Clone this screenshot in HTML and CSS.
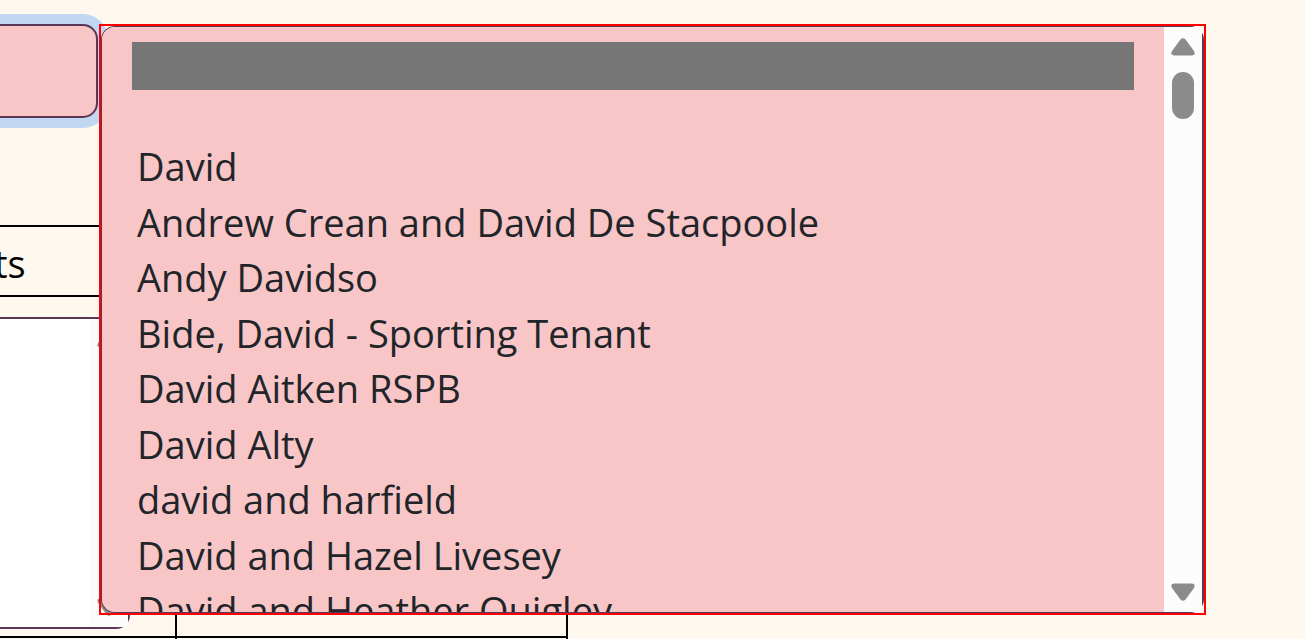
FILE: index.html
```html
<!DOCTYPE html>
<html lang="en">
<head>
<meta charset="utf-8">
<title>Contacts</title>
<link rel="stylesheet" href="styles.css">
</head>
<body>
<main class="page">
  <input class="search" type="text" aria-label="Search contacts">
  <table class="grid">
    <thead>
      <tr><th class="first" scope="col">ts</th><th></th></tr>
    </thead>
    <tbody>
      <tr>
        <td class="first">
          <div class="notes">
            <textarea class="notes-text" aria-label="Notes"></textarea>
            <div class="track">
              <svg class="arrow" viewBox="0 0 24 18" aria-hidden="true"><path d="M9.5 1.5Q12-1.2 14.5 1.5L23 13Q25 17.5 20.5 17.5H3.5Q-1 17.5 1 13Z"/></svg>
              <svg class="arrow" viewBox="0 0 24 18" aria-hidden="true"><path d="M9.5 16.5Q12 19.2 14.5 16.5L23 5Q25 .5 20.5 .5H3.5Q-1 .5 1 5Z"/></svg>
            </div>
          </div>
        </td>
        <td></td>
      </tr>
      <tr class="next"><td class="first"></td><td></td></tr>
    </tbody>
  </table>

  <div class="popup">
    <div class="panel">
      <select class="options" size="9" aria-label="Matching contacts">
        <option class="blank current"></option>
        <option class="blank"></option>
        <option>David</option>
        <option>Andrew Crean and David De Stacpoole</option>
        <option>Andy Davidso</option>
        <option>Bide, David - Sporting Tenant</option>
        <option>David Aitken RSPB</option>
        <option>David Alty</option>
        <option>david and harfield</option>
        <option>David and Hazel Livesey</option>
        <option>David and Heather Quigley</option>
      </select>
      <div class="track">
        <svg class="arrow" viewBox="0 0 24 18" aria-hidden="true"><path d="M9.5 1.5Q12-1.2 14.5 1.5L23 13Q25 17.5 20.5 17.5H3.5Q-1 17.5 1 13Z"/></svg>
        <div class="thumb"></div>
        <svg class="arrow" viewBox="0 0 24 18" aria-hidden="true"><path d="M9.5 16.5Q12 19.2 14.5 16.5L23 5Q25 .5 20.5 .5H3.5Q-1 .5 1 5Z"/></svg>
      </div>
    </div>
  </div>
</main>
</body>
</html>
```

FILE: styles.css
```css
* {
  box-sizing: border-box;
}

body {
  margin: 0;
  background: #fff8ee;
  color: #000;
  font: 38px/56px "Segoe UI", "Open Sans", "Noto Sans", sans-serif;
}

.page {
  position: relative;
  height: 100vh;
  padding-top: 24px;
  overflow: hidden;
}

.search {
  display: block;
  width: 98px;
  height: 94px;
  margin: 0 0 107px;
  border: 2px solid #5c3657;
  border-left: 0;
  border-radius: 0 15px 15px 0;
  outline: 0;
  background: #f8c6c7;
  box-shadow: 0 0 0 10px #c1d7f2;
  font: inherit;
}

.grid {
  width: 568px;
  table-layout: fixed;
  border-spacing: 0;
}

.grid th,
.grid td {
  padding: 0;
  border: solid #000;
  border-width: 0 2px 2px 0;
  font-weight: 400;
  text-align: left;
  vertical-align: top;
}

.grid th {
  height: 72px;
  padding: 8px 0 4px;
  border-top-width: 2px;
  text-indent: -6px;
}

.grid .first {
  width: 177px;
}

.next {
  height: 72px;
}

.notes {
  display: flex;
  width: 130px;
  height: 312px;
  margin: 20px 0 7px;
  border: 2px solid #5c3657;
  border-left: 0;
  border-radius: 0 14px 14px 0;
}

.notes-text {
  flex: 1;
  min-width: 0;
  padding: 0;
  border: 0;
  outline: 0;
  resize: none;
  background: #fff;
  font: inherit;
}

.track {
  display: flex;
  flex: none;
  flex-direction: column;
  align-items: center;
  width: 38px;
  padding: 11px 0;
  background: #fcfcfc;
}

.arrow {
  width: 24px;
  height: 18px;
  fill: #8b8b8b;
}

.arrow:last-child {
  margin-top: auto;
}

.thumb {
  width: 22px;
  height: 47px;
  margin-top: 16px;
  border-radius: 11px;
  background: #8b8b8b;
}

.popup {
  position: absolute;
  inset: 24px 99px;
  border: 2px solid #f00;
}

.panel {
  display: flex;
  height: 100%;
  border: 1px solid #5c3657;
  border-right-width: 2px;
  border-radius: 14px;
}

.options {
  flex: 1;
  min-width: 0;
  height: 100%;
  padding: 15px 30px 0;
  overflow: hidden;
  border: 0;
  border-radius: 13px 0 0 13px;
  outline: 0;
  appearance: none;
  background: #f8c6c7;
  color: #212529;
  font: inherit;
  scrollbar-width: none;
}

.options option {
  min-height: 0;
  padding: 2px 5px 1px;
}

.options option:nth-child(odd) {
  padding-bottom: 2px;
}

.options .blank {
  height: 48px;
}

.options .current {
  background: #767676;
}
```
